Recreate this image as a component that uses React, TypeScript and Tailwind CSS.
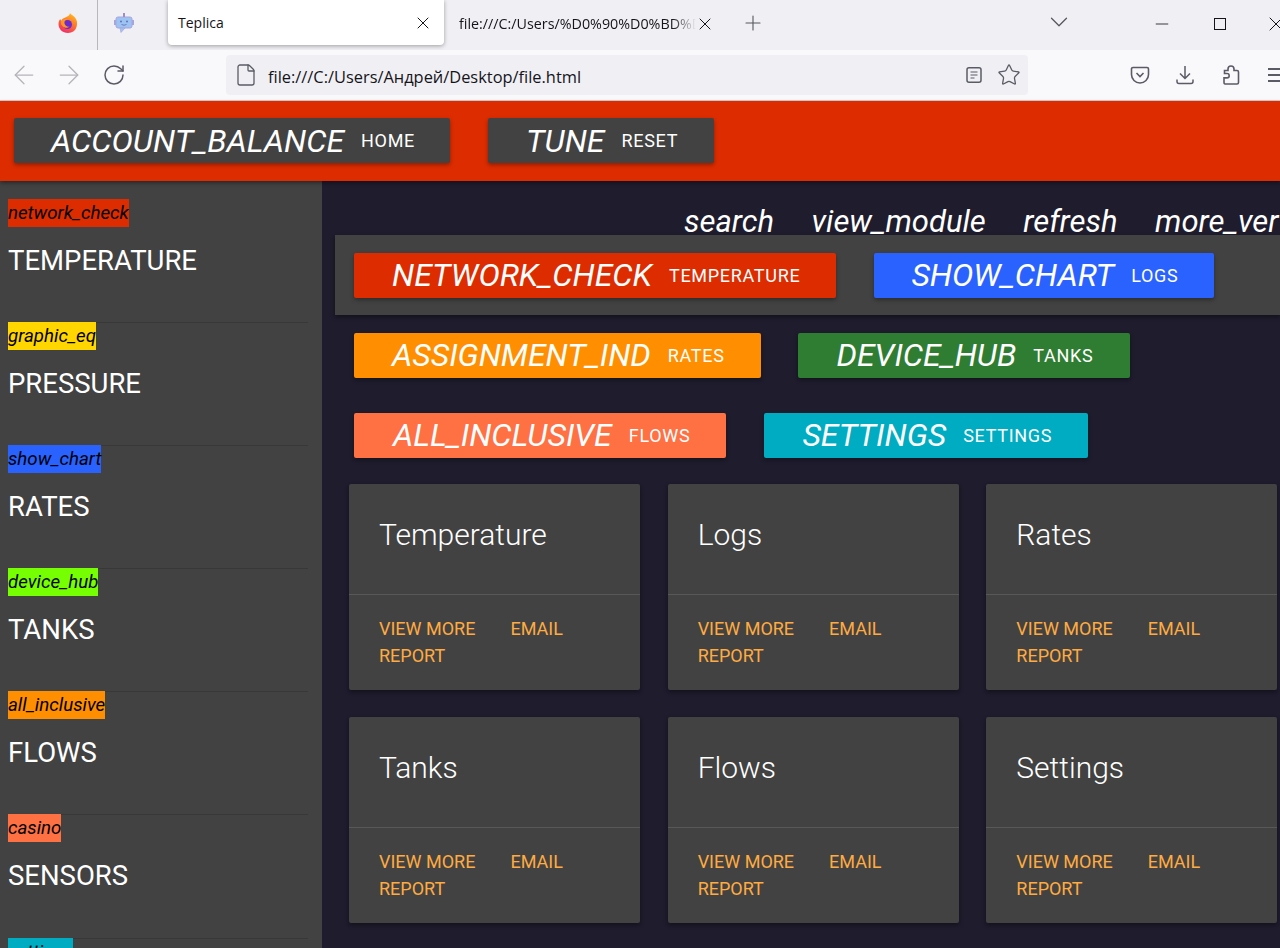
import { ArrowLeft, ArrowRight, RotateCw, X, Plus, ChevronDown, Minus, Star, File } from 'lucide-react';

const sideItems = [
    { icon: 'network_check', label: 'TEMPERATURE', color: 'bg-[#dd2c00]' },
    { icon: 'graphic_eq', label: 'PRESSURE', color: 'bg-[#ffd600]' },
    { icon: 'show_chart', label: 'RATES', color: 'bg-[#2962ff]' },
    { icon: 'device_hub', label: 'TANKS', color: 'bg-[#76ff03]' },
    { icon: 'all_inclusive', label: 'FLOWS', color: 'bg-[#ff8f00]' },
    { icon: 'casino', label: 'SENSORS', color: 'bg-[#ff7043]' },
    { icon: 'settings', label: 'SETTINGS', color: 'bg-[#00acc1]' },
];

const cards = ['Temperature', 'Logs', 'Rates', 'Tanks', 'Flows', 'Settings'];

const NavBtn = ({ icon, label, color }: { icon: string; label: string; color: string }) => (
    <a className={`flex items-center h-[45px] rounded-[2px] shadow-[0_2px_4px_rgba(0,0,0,0.35)] text-white whitespace-nowrap ${color}`}>
        <span className="italic text-[32px] mr-[17px] uppercase">{icon}</span>
        <span className="text-[18px] tracking-[0.7px] uppercase">{label}</span>
    </a>
);

const Card = ({ title }: { title: string }) => (
    <div className="bg-[#424242] rounded-[2px] shadow-[0_2px_4px_rgba(0,0,0,0.4)] h-[206px] flex flex-col">
        <div className="h-[111px] border-b border-[#585858] px-[30px] pt-[28px] text-[30px] font-light leading-[45px] text-white">
            {title}
        </div>
        <div className="px-[30px] pt-[20px] text-[18px] leading-[27px] text-[#ffab40]">
            <span className="mr-[35px]">VIEW MORE</span>
            <span>EMAIL</span>
            <div>REPORT</div>
        </div>
    </div>
);

const Firefox = () => (
    <svg width="20" height="22" viewBox="0 0 20 22">
        <defs>
            <linearGradient id="ff" x1="0.8" y1="0" x2="0.3" y2="1">
                <stop offset="0" stopColor="#ffc21f" />
                <stop offset="0.45" stopColor="#ff7a2a" />
                <stop offset="1" stopColor="#f02a6a" />
            </linearGradient>
        </defs>
        <path d="M12 1c1 2 5 3 6.500 7 1.500 4 .5 13-8.500 13C4.500 21 .5 17 .5 12c0-2 .7-4 1.700-5 .3 1 .8 1.500 1.300 1.800C4 6 7 6 8.500 5 10 4 12 3 12 1z" fill="url(#ff)" />
        <circle cx="9.500" cy="12.500" r="4.500" fill="#6a2bd0" />
        <path d="M3 10c1-2.500 4-3.500 6.500-2.500-2 0-3.500 1.500-3 4 .5 2.500 3 3.500 5 3-2 2-5.500 1.500-7-.5C3.500 13 2.800 11.500 3 10z" fill="#ff9a1f" />
    </svg>
);

const Robot = () => (
    <svg width="22" height="22" viewBox="0 0 22 22">
        <rect x="3" y="5" width="16" height="11" rx="2" fill="#9cc4f2" stroke="#a9a4dc" strokeWidth="1" />
        <rect x="1" y="8" width="2" height="5" fill="#a9a4dc" />
        <rect x="19" y="8" width="2" height="5" fill="#a9a4dc" />
        <rect x="10" y="1" width="2" height="4" fill="#a58ac8" />
        <path d="M7 16h5l-4 4.500z" fill="#9cc4f2" stroke="#a9a4dc" strokeWidth="0.7" />
        <circle cx="8" cy="9.500" r="1" fill="#6a70b8" />
        <circle cx="14" cy="9.500" r="1" fill="#6a70b8" />
        <path d="M8.500 12.500q2.500 1.500 5 0" stroke="#6a70b8" strokeWidth="0.9" fill="none" />
    </svg>
);

const App = () => {
    return (
        <div className="w-[1280px] h-[948px] overflow-hidden bg-[#1e1c2d] font-['Roboto',sans-serif] flex flex-col">
            {/* browser tabs */}
            <div className="h-[50px] shrink-0 bg-[#f0f0f4] flex items-center text-[#15141a] font-['Open_Sans',sans-serif] overflow-hidden">
                <div className="w-[98px] h-full shrink-0 flex items-center justify-end pr-[19px] border-r border-[#b8b8bc]">
                    <div className="-mt-[4px]">
                        <Firefox />
                    </div>
                </div>
                <div className="w-[70px] shrink-0 flex justify-center pr-[18px] -mt-[5px]">
                    <Robot />
                </div>
                <div className="w-[276px] h-[45px] shrink-0 -mt-[5px] bg-white rounded-b-[4px] shadow-[0_1px_4px_rgba(0,0,0,0.35)] flex items-center justify-between pl-[10px] pr-[11px] text-[14px]">
                    <span>Teplica</span>
                    <X size={20} strokeWidth={1.2} />
                </div>
                <div className="ml-[15px] flex items-center text-[14.300px] -mt-[3px] shrink-0">
                    <span className="w-[237px] overflow-hidden whitespace-nowrap [mask-image:linear-gradient(to_left,transparent,black_24px)]">file:///C:/Users/%D0%90%D0%BD%D0%B4</span>
                    <X size={20} strokeWidth={1.2} className="-ml-[1px]" />
                </div>
                <Plus size={24} strokeWidth={1.1} className="ml-[26px] -mt-[4px] text-[#55555f] shrink-0" />
                <ChevronDown size={30} strokeWidth={1} className="ml-[279px] -mt-[6px] text-[#55555f] shrink-0" />
                <Minus size={20} strokeWidth={1} className="ml-[78px] -mt-[3px] shrink-0" />
                <svg width="12" height="12" viewBox="0 0 12 12" className="ml-[42px] -mt-[3px] shrink-0">
                    <rect x="0.500" y="0.500" width="11" height="11" fill="none" stroke="#15141a" strokeWidth="1" />
                </svg>
                <X size={24} strokeWidth={1} className="ml-[38px] -mt-[3px] shrink-0" />
            </div>
            {/* browser toolbar */}
            <div className="h-[51px] shrink-0 bg-[#f9f9fb] border-b border-[#cfcfd8] flex items-center text-[#5b5b66] overflow-hidden">
                <ArrowLeft size={30} strokeWidth={1} className="ml-[9px] text-[#b4b4ba] shrink-0" />
                <ArrowRight size={30} strokeWidth={1} className="ml-[15px] text-[#b4b4ba] shrink-0" />
                <RotateCw size={24} strokeWidth={1.500} className="ml-[18px] shrink-0" />
                <div className="ml-[100px] w-[802px] h-[40px] shrink-0 rounded-[4px] bg-[#f0f0f4] flex items-center pl-[8px] pr-[7px] font-['Open_Sans',sans-serif]">
                    <File size={24} strokeWidth={1.300} />
                    <span className="ml-[10px] mt-[4px] text-[16.400px] text-[#15141a]">file:///C:/Users/Андрей/Desktop/file.html</span>
                    <svg width="16" height="16" viewBox="0 0 16 16" fill="none" stroke="currentColor" strokeWidth="1.500" className="ml-auto">
                        <rect x="1" y="0.800" width="14" height="14.400" rx="2" />
                        <path d="M4.500 5h7M4.500 8h7M4.500 11h4" strokeWidth="1.200" />
                    </svg>
                    <Star size={24} strokeWidth={1.300} className="ml-[15px]" />
                </div>
                <svg width="20" height="20" viewBox="0 0 20 20" fill="none" stroke="currentColor" strokeWidth="1.600" className="ml-[102px] shrink-0">
                    <path d="M3 2.500h14a1.500 1.500 0 0 1 1.500 1.500v5.500a8.500 8.500 0 0 1-17 0V4A1.500 1.500 0 0 1 3 2.500z" />
                    <path d="M6.500 8l3.500 3.500L13.500 8" />
                </svg>
                <svg width="18" height="20" viewBox="0 0 18 20" fill="none" stroke="currentColor" strokeWidth="1.500" className="ml-[26px] shrink-0">
                    <path d="M9 1v12M4 8.500l5 5 5-5" />
                    <path d="M1 14.500v2a2 2 0 0 0 2 2h12a2 2 0 0 0 2-2v-2" />
                </svg>
                <svg width="18" height="20" viewBox="0 0 18 20" fill="none" stroke="currentColor" strokeWidth="1.600" className="ml-[28px] shrink-0">
                    <path d="M3 19h12a1.500 1.500 0 0 0 1.500-1.500V7A1.500 1.500 0 0 0 15 5.500h-3V4a3 3 0 0 0-6 0v1.500H2.500v3H5a2.200 2.200 0 0 1 0 4.400H2v4.600A1.500 1.500 0 0 0 3 19z" />
                </svg>
                <div className="ml-[28px] w-[14px] shrink-0 flex flex-col gap-[4px]">
                    <div className="h-[2px] bg-[#5b5b66]" />
                    <div className="h-[2px] bg-[#5b5b66]" />
                    <div className="h-[2px] bg-[#5b5b66]" />
                </div>
            </div>
            {/* red header */}
            <div className="h-[80px] shrink-0 bg-[#dd2c00] flex items-center gap-[38px] pl-[14px] pb-[1px] shadow-[0_2px_4px_rgba(0,0,0,0.4)] relative">
                <NavBtn icon="account_balance" label="home" color="bg-[#424242] pl-[37px] pr-[35px]" />
                <NavBtn icon="tune" label="reset" color="bg-[#424242] pl-[38px] pr-[36px]" />
            </div>
            <div className="flex flex-1 min-h-0">
                {/* sidebar */}
                <div className="w-[322px] shrink-0 bg-[#424242] pl-[8px] pr-[14px] pt-[18px] overflow-hidden">
                    {sideItems.map((item) => (
                        <div key={item.icon} className="h-[124.100px] border-b border-[#383838] -mt-px first:mt-0">
                            <div className={`w-fit h-[27.500px] italic text-[18.700px] leading-[28px] text-black whitespace-nowrap ${item.color}`}>
                                {item.icon}
                            </div>
                            <div className="mt-[16.500px] text-[27.500px] leading-[36px] text-white">{item.label}</div>
                        </div>
                    ))}
                </div>
                {/* main */}
                <div className="flex-1 min-w-0 pl-[13px] overflow-hidden">
                    <div className="flex gap-[37.500px] pl-[349px] w-[1100px] h-[54px] pt-[23px] italic text-[31px] leading-[35px] text-white whitespace-nowrap">
                        <span>search</span>
                        <span>view_module</span>
                        <span>refresh</span>
                        <span>more_vert</span>
                    </div>
                    <div className="bg-[#424242] h-[80px] pl-[19px] flex items-center gap-[38px] shadow-[0_2px_4px_rgba(0,0,0,0.4)]">
                        <NavBtn icon="network_check" label="temperature" color="bg-[#dd2c00] pl-[38px] pr-[36px]" />
                        <NavBtn icon="show_chart" label="logs" color="bg-[#2962ff] pl-[37px] pr-[36px]" />
                    </div>
                    <div className="h-[80px] pl-[19px] flex items-center gap-[37px]">
                        <NavBtn icon="assignment_ind" label="rates" color="bg-[#ff8f00] pl-[38px] pr-[36px]" />
                        <NavBtn icon="device_hub" label="tanks" color="bg-[#2e7d32] pl-[39px] pr-[37px]" />
                    </div>
                    <div className="h-[80px] pl-[19px] flex items-center gap-[38px]">
                        <NavBtn icon="all_inclusive" label="flows" color="bg-[#ff7043] pl-[39px] pr-[36px]" />
                        <NavBtn icon="settings" label="settings" color="bg-[#00acc1] pl-[38px] pr-[36px]" />
                    </div>
                    <div className="grid grid-cols-3 gap-x-[27.670px] gap-y-[27px] pl-[14px] mt-[9px] w-[942.330px]">
                        {cards.map((c) => (
                            <Card key={c} title={c} />
                        ))}
                    </div>
                </div>
            </div>
        </div>
    );
};

export default App;
